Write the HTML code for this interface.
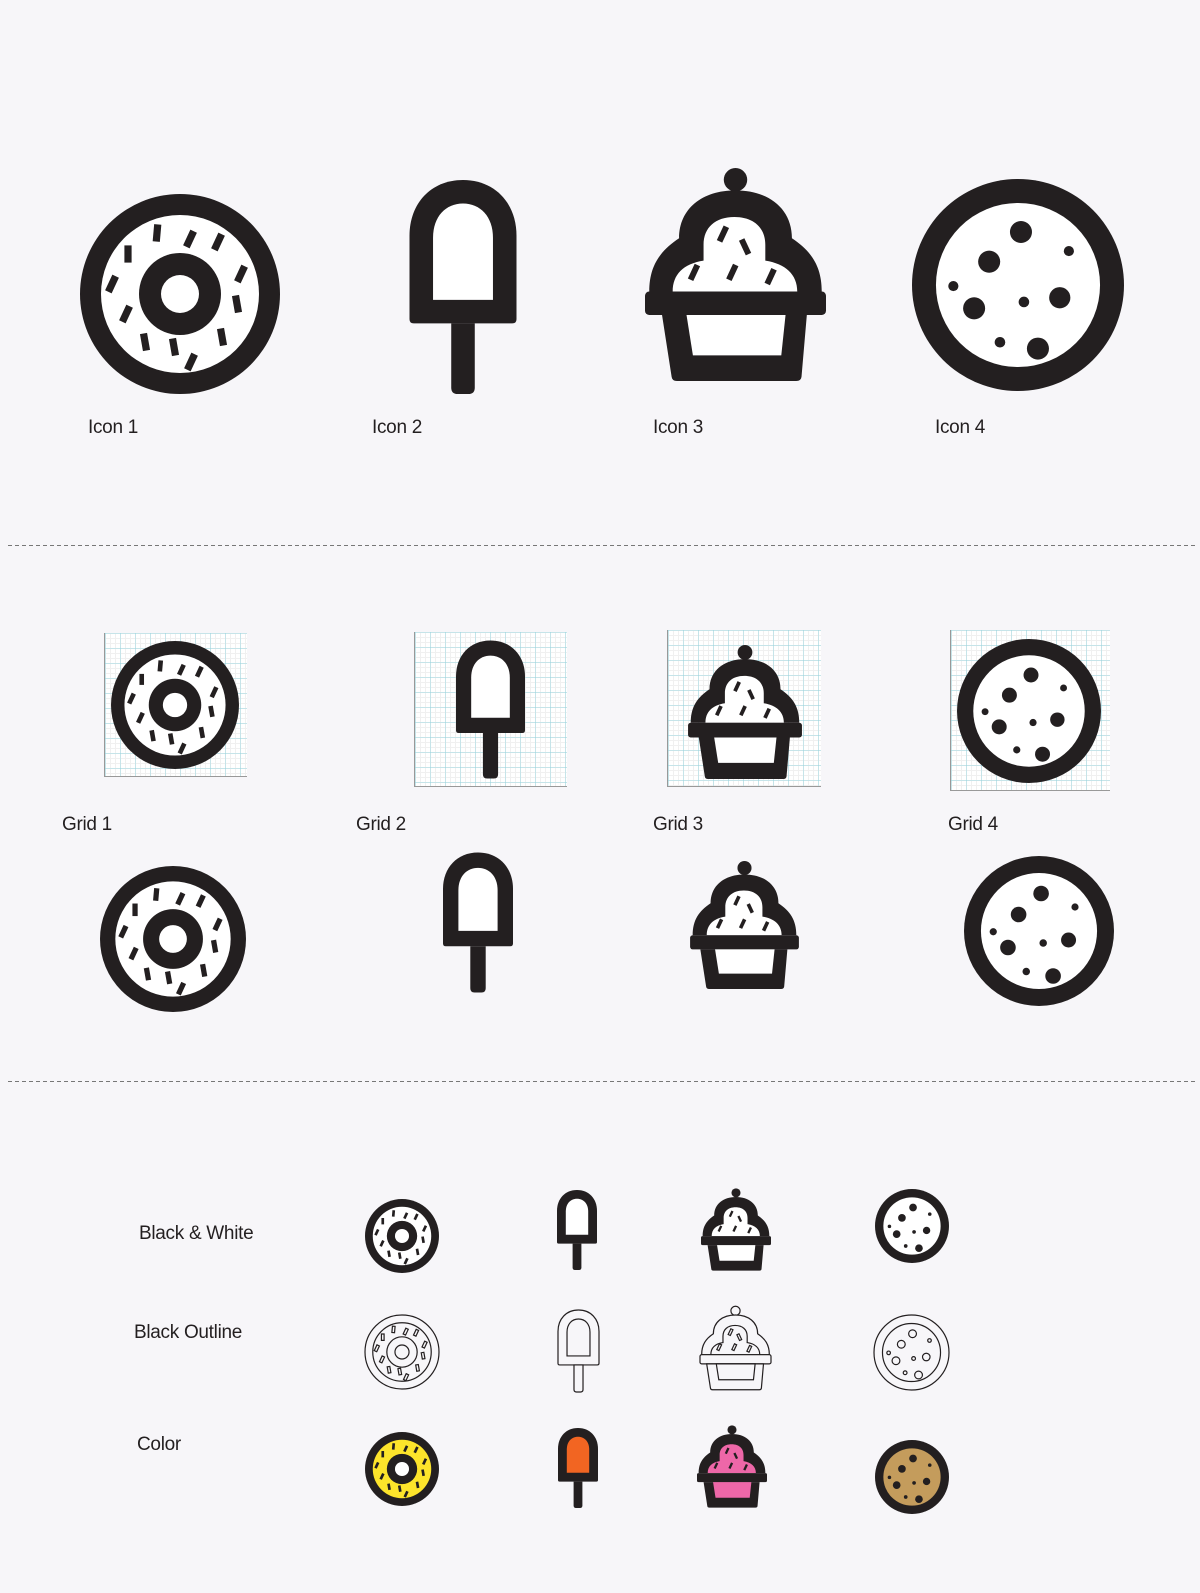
<!DOCTYPE html>
<html><head><meta charset="utf-8">
<style>
html,body{margin:0;padding:0}
body{width:1200px;height:1593px;background:#f7f6f9;position:relative;overflow:hidden;font-family:"Liberation Sans",sans-serif;color:#231f20}
.t{position:absolute;font-size:19px;line-height:19px;letter-spacing:-0.3px;white-space:nowrap}
svg.i{position:absolute;overflow:visible}
.dash{position:absolute;left:8px;width:1188px;height:1px;background:repeating-linear-gradient(90deg,#777 0 4px,transparent 4px 7px)}
.grid{position:absolute;background-color:#fff;
background-image:linear-gradient(90deg,rgba(120,205,220,.35) 1px,transparent 1px),linear-gradient(rgba(120,205,220,.35) 1px,transparent 1px),linear-gradient(90deg,#f0f0f0 1px,transparent 1px),linear-gradient(#f0f0f0 1px,transparent 1px);
background-size:15px 15px,15px 15px,5px 5px,5px 5px;border-left:1px solid #999;border-bottom:1px solid #999;box-sizing:border-box}
symbol *{vector-effect:non-scaling-stroke}
.bw{--b:#231f20;--w:#fff;--h:#fff}
.ol{--b:#f7f6f9;--w:#f7f6f9;--h:#f7f6f9}
.ol{stroke:#231f20;stroke-width:1.2}
</style></head><body>
<svg width="0" height="0" style="position:absolute">
<defs>
<symbol id="donut" viewBox="-50 -50 100 100" overflow="visible">
<circle r="50" fill="var(--b)"/><circle r="39.5" fill="var(--w)"/><circle r="20.5" fill="var(--b)"/><circle r="9.5" fill="var(--h)"/>
<g fill="var(--b)">
<rect x="-1.8" y="-4.3" width="3.6" height="8.6" transform="translate(-11.5,-30.5) rotate(5)"/>
<rect x="-1.8" y="-4.3" width="3.6" height="8.6" transform="translate(5,-27.5) rotate(25)"/>
<rect x="-1.8" y="-4.3" width="3.6" height="8.6" transform="translate(19,-26) rotate(25)"/>
<rect x="-1.8" y="-4.3" width="3.6" height="8.6" transform="translate(-26,-20) rotate(0)"/>
<rect x="-1.8" y="-4.3" width="3.6" height="8.6" transform="translate(30.5,-10) rotate(25)"/>
<rect x="-1.8" y="-4.3" width="3.6" height="8.6" transform="translate(-34,-5) rotate(25)"/>
<rect x="-1.8" y="-4.3" width="3.6" height="8.6" transform="translate(28.5,5) rotate(-10)"/>
<rect x="-1.8" y="-4.3" width="3.6" height="8.6" transform="translate(-27,10) rotate(25)"/>
<rect x="-1.8" y="-4.3" width="3.6" height="8.6" transform="translate(21,21.5) rotate(-10)"/>
<rect x="-1.8" y="-4.3" width="3.6" height="8.6" transform="translate(-17.5,24) rotate(-10)"/>
<rect x="-1.8" y="-4.3" width="3.6" height="8.6" transform="translate(-3,26.5) rotate(-10)"/>
<rect x="-1.8" y="-4.3" width="3.6" height="8.6" transform="translate(5.5,34) rotate(25)"/>
</g>
</symbol>
<symbol id="pop" viewBox="0 0 50 100" overflow="visible">
<path d="M0,26 C0,11 10,0 25,0 C40,0 50,11 50,26 V65 Q50,67 48,67 H2 Q0,67 0,65 Z" fill="var(--b)"/>
<path d="M11,27 C11,17 17,11 25,11 C33,11 39,17 39,27 V56 H11 Z" fill="var(--w)"/>
<path d="M19.5,67 H30.5 V97 Q30.5,100 27.5,100 H22.5 Q19.5,100 19.5,97 Z" fill="var(--b)"/>
</symbol>
<symbol id="cake" viewBox="0 0 85 100" overflow="visible">
<circle cx="42.5" cy="5.5" r="5.5" fill="var(--b)"/>
<path d="M2,58 C2,46 7,39 16,33 C16,19 27,10.5 42.5,10.5 C58,10.5 69,19 69,33 C78,39 83,46 83,58 Z" fill="var(--b)"/>
<path d="M13,58 C13,50 18,45 27.5,43.5 V36 C27.5,28 33,23 42,23 C51,23 56.5,28 56.5,36 V43.5 C66,45 71.5,50 71.5,58 Z" fill="var(--w)"/>
<g fill="var(--b)">
<rect x="-1.4" y="-3.8" width="2.8" height="7.6" transform="translate(36.6,31) rotate(25)"/>
<rect x="-1.4" y="-3.8" width="2.8" height="7.6" transform="translate(47,37) rotate(-25)"/>
<rect x="-1.4" y="-3.8" width="2.8" height="7.6" transform="translate(23,49) rotate(25)"/>
<rect x="-1.4" y="-3.8" width="2.8" height="7.6" transform="translate(41,49) rotate(25)"/>
<rect x="-1.4" y="-3.8" width="2.8" height="7.6" transform="translate(59,51) rotate(25)"/>
</g>
<rect x="0" y="58" width="85" height="11" rx="2" fill="var(--b)"/>
<path d="M8,69 H76 L73.5,98 Q73.3,100 71,100 H15 Q12.7,100 12.5,98 Z" fill="var(--b)"/>
<path d="M19.5,69 H66 L64,88 H22.5 Z" fill="var(--w)"/>
</symbol>
<symbol id="cookie" viewBox="-50 -50 100 100" overflow="visible">
<circle r="50" fill="var(--b)"/><circle r="38.7" fill="var(--w)"/>
<g fill="var(--b)">
<circle cx="1.4" cy="-25" r="5.2"/><circle cx="24" cy="-16" r="2.4"/><circle cx="-13.6" cy="-11" r="5.2"/>
<circle cx="-30.5" cy="0.5" r="2.4"/><circle cx="19.7" cy="6" r="5"/><circle cx="2.8" cy="8" r="2.5"/>
<circle cx="-20.7" cy="11" r="5.2"/><circle cx="-8.5" cy="27" r="2.5"/><circle cx="9.4" cy="30" r="5.2"/>
</g>
</symbol>
</defs></svg>

<!-- Row 1 -->
<svg class="i bw" style="left:80px;top:194px" width="200" height="200"><use href="#donut" width="200" height="200"/></svg>
<svg class="i bw" style="left:409px;top:180px" width="108" height="214"><use href="#pop" width="108" height="214"/></svg>
<svg class="i bw" style="left:645px;top:168px" width="181" height="213"><use href="#cake" width="181" height="213"/></svg>
<svg class="i bw" style="left:912px;top:179px" width="212" height="212"><use href="#cookie" width="212" height="212"/></svg>
<div class="t" style="left:88px;top:418px">Icon 1</div>
<div class="t" style="left:372px;top:418px">Icon 2</div>
<div class="t" style="left:653px;top:418px">Icon 3</div>
<div class="t" style="left:935px;top:418px">Icon 4</div>

<div class="dash" style="top:545px"></div>

<!-- Grid row -->
<div class="grid" style="left:104px;top:633px;width:143px;height:144px"></div>
<div class="grid" style="left:414px;top:632px;width:153px;height:155px"></div>
<div class="grid" style="left:667px;top:630px;width:154px;height:157px"></div>
<div class="grid" style="left:950px;top:630px;width:160px;height:161px"></div>
<svg class="i bw" style="left:111px;top:641px" width="128" height="128"><use href="#donut" width="128" height="128"/></svg>
<svg class="i bw" style="left:456px;top:640px" width="69" height="139"><use href="#pop" width="69" height="139"/></svg>
<svg class="i bw" style="left:688px;top:645px" width="114" height="134"><use href="#cake" width="114" height="134"/></svg>
<svg class="i bw" style="left:957px;top:639px" width="144" height="144"><use href="#cookie" width="144" height="144"/></svg>
<div class="t" style="left:62px;top:815px">Grid 1</div>
<div class="t" style="left:356px;top:815px">Grid 2</div>
<div class="t" style="left:653px;top:815px">Grid 3</div>
<div class="t" style="left:948px;top:815px">Grid 4</div>

<!-- Row 3 -->
<svg class="i bw" style="left:100px;top:866px" width="146" height="146"><use href="#donut" width="146" height="146"/></svg>
<svg class="i bw" style="left:443px;top:851px" width="70" height="143"><use href="#pop" width="70" height="143"/></svg>
<svg class="i bw" style="left:690px;top:861px" width="109" height="128"><use href="#cake" width="109" height="128"/></svg>
<svg class="i bw" style="left:964px;top:856px" width="150" height="150"><use href="#cookie" width="150" height="150"/></svg>

<div class="dash" style="top:1081px"></div>

<!-- Bottom -->
<div class="t" style="left:139px;top:1224px">Black &amp; White</div>
<div class="t" style="left:134px;top:1323px">Black Outline</div>
<div class="t" style="left:137px;top:1435px">Color</div>

<svg class="i bw" style="left:365px;top:1199px" width="74" height="74"><use href="#donut" width="74" height="74"/></svg>
<svg class="i bw" style="left:557px;top:1190px" width="40" height="80"><use href="#pop" width="40" height="80"/></svg>
<svg class="i bw" style="left:701px;top:1188px" width="70" height="83"><use href="#cake" width="70" height="83"/></svg>
<svg class="i bw" style="left:875px;top:1189px" width="74" height="74"><use href="#cookie" width="74" height="74"/></svg>

<svg class="i ol" style="left:365px;top:1315px" width="74" height="74"><use href="#donut" width="74" height="74"/></svg>
<svg class="i ol" style="left:558px;top:1310px" width="41" height="82"><use href="#pop" width="41" height="82"/></svg>
<svg class="i ol" style="left:700px;top:1306px" width="71" height="84"><use href="#cake" width="71" height="84"/></svg>
<svg class="i ol" style="left:874px;top:1315px" width="75" height="75"><use href="#cookie" width="75" height="75"/></svg>

<svg class="i bw" style="left:365px;top:1432px;--w:#fde42b" width="74" height="74"><use href="#donut" width="74" height="74"/></svg>
<svg class="i bw" style="left:558px;top:1428px;--w:#f26522" width="40" height="80"><use href="#pop" width="40" height="80"/></svg>
<svg class="i bw" style="left:697px;top:1425px;--w:#ee67a8" width="70" height="83"><use href="#cake" width="70" height="83"/></svg>
<svg class="i bw" style="left:875px;top:1440px;--w:#c49c5c" width="74" height="74"><use href="#cookie" width="74" height="74"/></svg>
</body></html>
